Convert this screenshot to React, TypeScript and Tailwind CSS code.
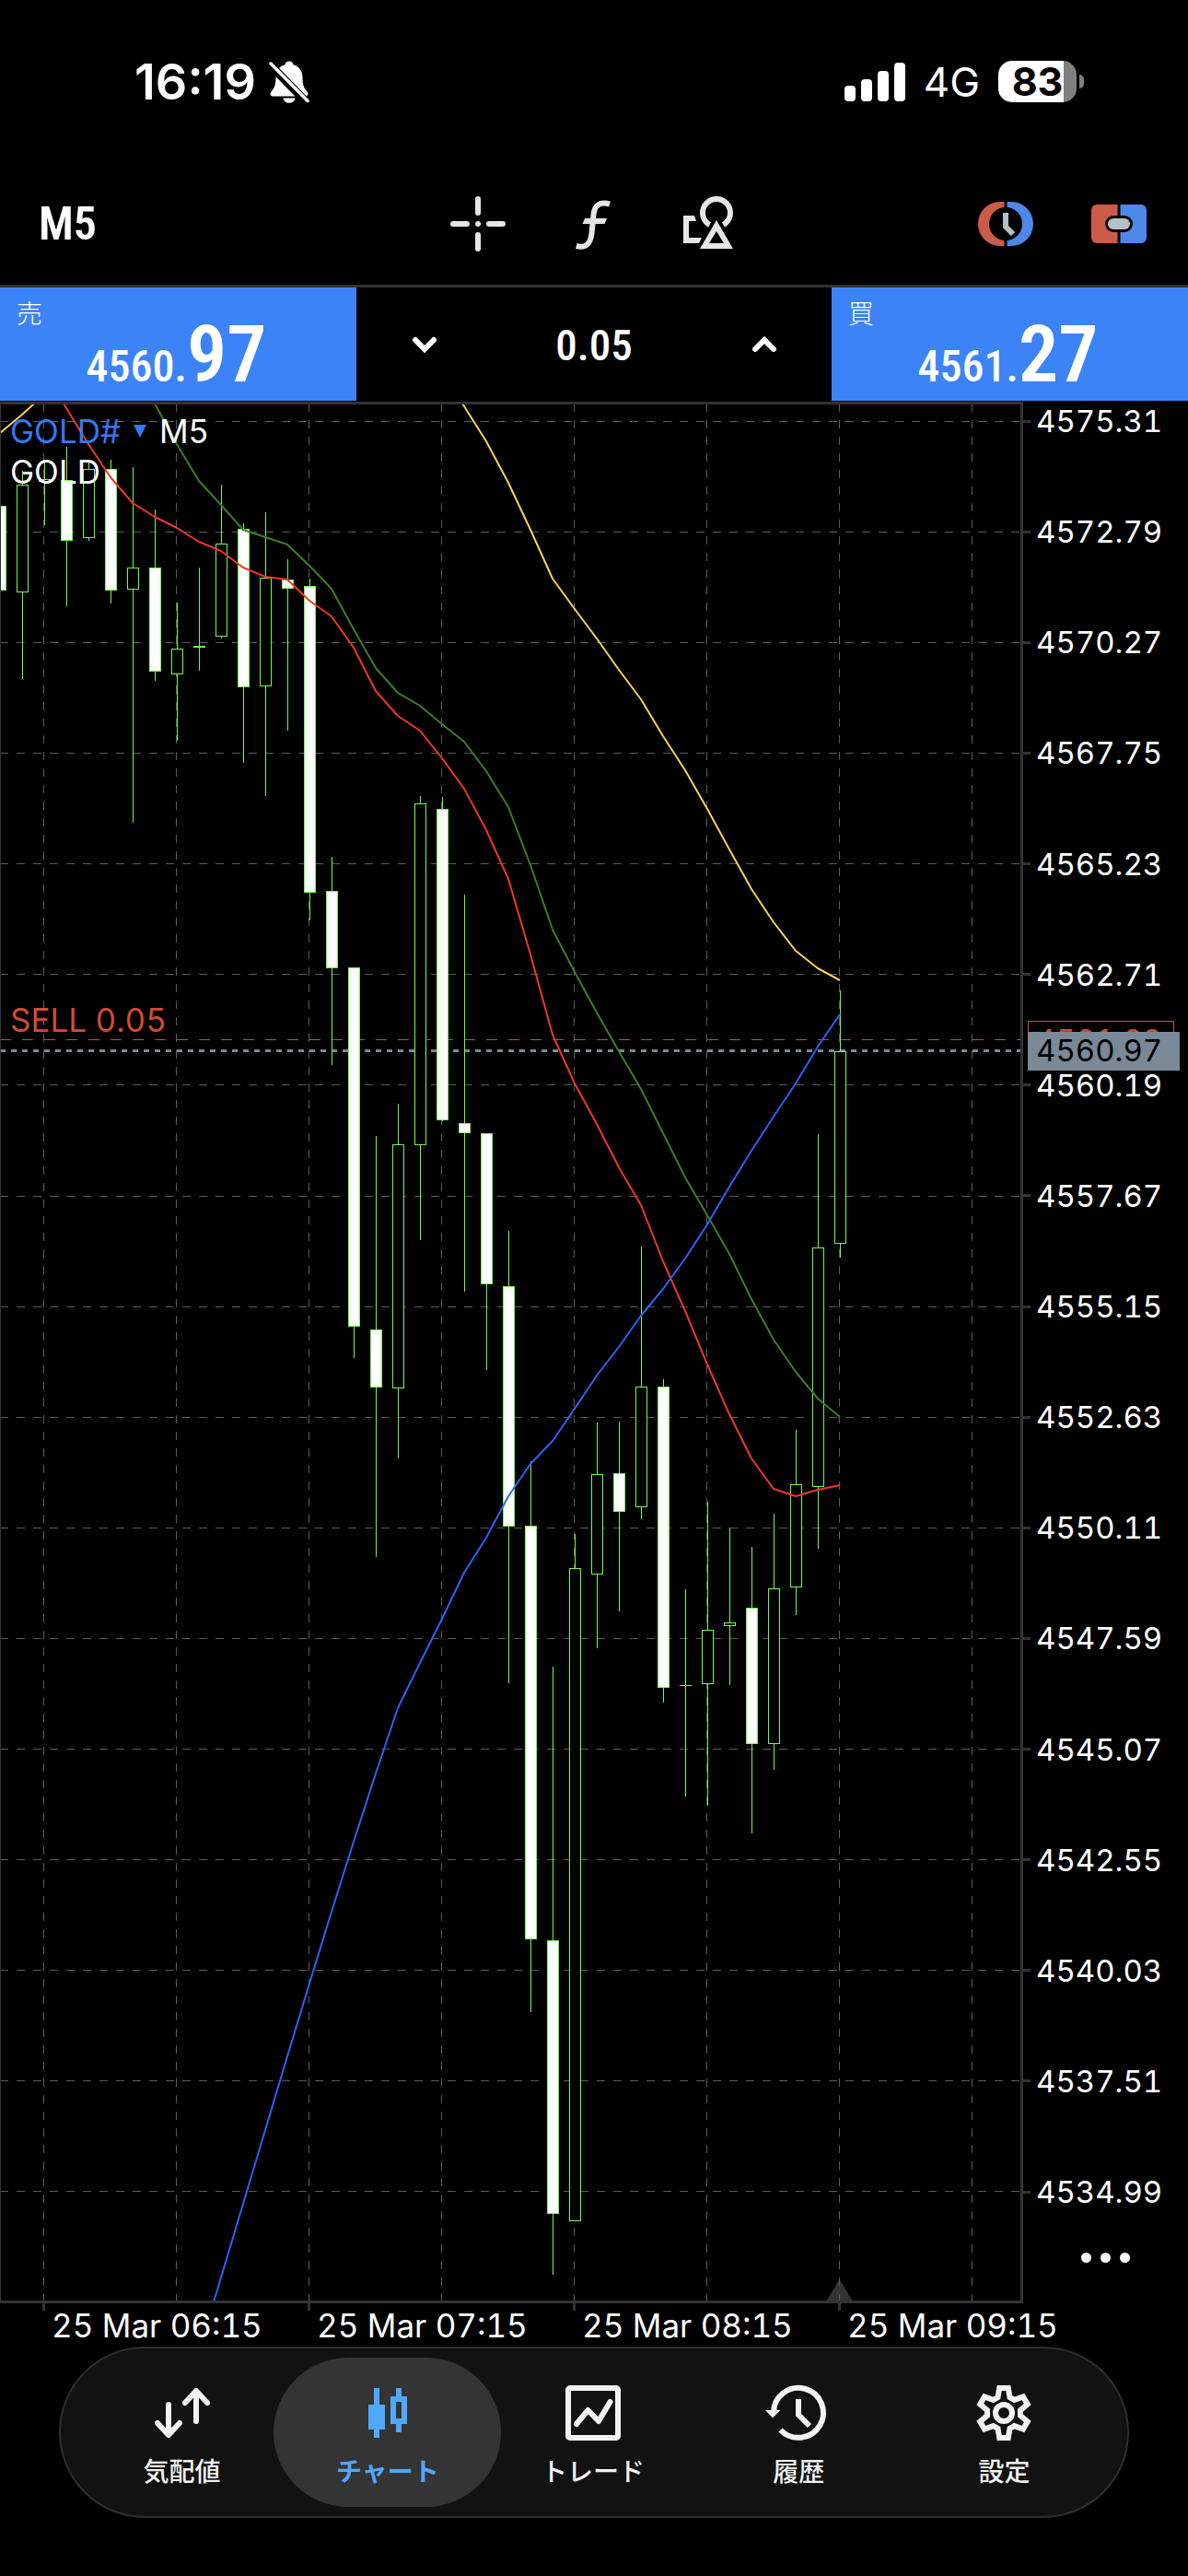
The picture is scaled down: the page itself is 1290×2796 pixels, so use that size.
import React from "react";

type Candle = {
  /** slot index on the time grid */
  slot: number;
  bodyTop: number;
  bodyBottom: number;
  high: number;
  low: number;
  down: boolean;
};

const TOP = 436;
const HEIGHT = 2064;
const WIDTH = 1111;

const up = (slot: number, bodyTop: number, bodyBottom: number, high: number, low: number): Candle => ({
  slot, bodyTop, bodyBottom, high, low, down: false,
});
const down = (slot: number, bodyTop: number, bodyBottom: number, high: number, low: number): Candle => ({
  slot, bodyTop, bodyBottom, high, low, down: true,
});

const candles: Candle[] = [
  down(0, 549, 640, 549, 640),
  up(1, 526, 642, 511, 737),
  up(2, 520, 522, 500, 570),
  down(3, 521, 586, 485, 658),
  up(4, 509, 583, 499, 587),
  down(5, 509, 640, 499, 655),
  up(6, 616, 639, 507, 893),
  down(7, 616, 728, 553, 739),
  up(8, 704, 731, 654, 804),
  up(9, 701, 702, 616, 728),
  up(10, 590, 690, 526, 693),
  down(11, 574, 745, 568, 828),
  up(12, 627, 744, 556, 864),
  down(13, 629, 638, 607, 793),
  down(14, 636, 968, 628, 999),
  down(15, 967, 1050, 930, 1156),
  down(16, 1050, 1439, 1050, 1474),
  down(17, 1443, 1505, 1233, 1690),
  up(18, 1242, 1506, 1198, 1583),
  up(19, 872, 1242, 864, 1346),
  down(20, 878, 1215, 865, 1217),
  down(21, 1219, 1229, 971, 1402),
  down(22, 1230, 1393, 1230, 1487),
  down(23, 1396, 1656, 1336, 1827),
  down(24, 1656, 2104, 1586, 2184),
  down(25, 2106, 2402, 1809, 2469),
  up(26, 1702, 2410, 1665, 2410),
  up(27, 1600, 1708, 1544, 1789),
  down(28, 1599, 1640, 1543, 1749),
  up(29, 1505, 1635, 1353, 1649),
  down(30, 1505, 1831, 1497, 1848),
  up(31, 1829, 1829, 1725, 1950),
  up(32, 1769, 1827, 1630, 1960),
  up(33, 1761, 1764, 1658, 1829),
  down(34, 1745, 1892, 1679, 1990),
  up(35, 1724, 1892, 1643, 1921),
  up(36, 1611, 1722, 1552, 1753),
  up(37, 1354, 1613, 1231, 1681),
  up(38, 1141, 1349, 1075, 1365),
];

/** Moving averages: first slot followed by one value for each slot. */
const averages = [
  {
    color: "#3a7f25",
    first: 6,
    values: [396, 438, 482, 522, 548, 575, 583, 591, 614, 639, 683, 725, 752, 766, 786, 805, 837, 876, 939, 1009, 1055, 1099, 1141, 1182, 1230, 1278, 1319, 1361, 1410, 1454, 1489, 1518, 1538],
  },
  {
    color: "#f23625",
    first: 2,
    values: [403, 443, 482, 518, 546, 561, 573, 588, 598, 616, 626, 629, 652, 669, 703, 750, 777, 793, 823, 856, 901, 954, 1036, 1123, 1176, 1220, 1267, 1308, 1369, 1423, 1481, 1535, 1583, 1616, 1624, 1617, 1612],
  },
  {
    color: "#fbd15b",
    first: 0,
    values: [470, 450, 428],
  },
  {
    color: "#fbd15b",
    first: 20,
    values: [405, 441, 479, 524, 575, 628, 661, 693, 727, 759, 799, 836, 878, 922, 965, 1001, 1032, 1051, 1064],
  },
  {
    color: "#2b62fb",
    first: 9,
    values: [2553, 2472, 2392, 2312, 2232, 2153, 2075, 1999, 1925, 1854, 1805, 1757, 1707, 1669, 1624, 1589, 1564, 1529, 1493, 1462, 1428, 1399, 1366, 1329, 1288, 1249, 1212, 1176, 1136, 1101],
  },
];

const prices = [
  "4575.31", "4572.79", "4570.27", "4567.75", "4565.23", "4562.71", "4560.19", "4557.67", "4555.15",
  "4552.63", "4550.11", "4547.59", "4545.07", "4542.55", "4540.03", "4537.51", "4534.99",
];
const times = ["25 Mar 06:15", "25 Mar 07:15", "25 Mar 08:15", "25 Mar 09:15"];
const gridColumns = [47, 191, 335, 479, 623, 767, 911, 1055];
const gridRows = prices.map((_, i) => Math.round(457 + i * 120.08) + 0.5);

const fraction = (y: number) => `${((y - TOP) / HEIGHT) * 100}%`;

function ChartDrawing() {
  return (
    <svg viewBox={`0 ${TOP} ${WIDTH} ${HEIGHT}`} className="block h-auto w-full" aria-hidden="true">
      <path d="M897 2498 L911.5 2474 L926 2498 Z" fill="#333" />
      <g stroke="#5c5c5c" strokeWidth="1" strokeDasharray="9 9" shapeRendering="crispEdges">
        {gridColumns.map((x) => (
          <line key={x} x1={x + 0.5} x2={x + 0.5} y1="438" y2="2497" />
        ))}
        {gridRows.map((y) => (
          <line key={y} x1="0" x2="1108" y1={y} y2={y} />
        ))}
      </g>
      <line x1="0" x2="1108" y1="1128.5" y2="1128.5" stroke="#cf4a33" strokeDasharray="12 12" shapeRendering="crispEdges" />
      <line x1="0" x2="1108" y1="1140.5" y2="1140.5" stroke="#7b8896" strokeWidth="3" strokeDasharray="6 6" shapeRendering="crispEdges" />
      <g stroke="#75fb4c" strokeWidth="1" shapeRendering="crispEdges">
        {candles.map((c) => {
          const x = c.slot * 24 + 0.5;
          return (
            <g key={c.slot}>
              {c.high < c.low && <line x1={x} x2={x} y1={c.high} y2={c.low} />}
              {c.bodyTop === c.bodyBottom ? (
                <line x1={x - 6.5} x2={x + 6.5} y1={c.bodyTop + 0.5} y2={c.bodyTop + 0.5} />
              ) : (
                <rect x={x - 6} y={c.bodyTop + 0.5} width="12" height={c.bodyBottom - c.bodyTop} fill={c.down ? "#fff" : "#000"} />
              )}
            </g>
          );
        })}
      </g>
      <g fill="none" strokeWidth="2" strokeLinejoin="round">
        {averages.map((a) => (
          <polyline
            key={`${a.color}-${a.first}`}
            stroke={a.color}
            points={a.values.map((y, i) => `${(a.first + i) * 24},${y}`).join(" ")}
          />
        ))}
      </g>
      <g fill="#333">
        <rect x="0" y="436" width="1111" height="3" />
        <rect x="0" y="2497" width="1111" height="3" />
        <rect x="1108" y="436" width="3" height="2064" />
        <rect x="0" y="436" width="1" height="2064" />
      </g>
    </svg>
  );
}

function BellOff() {
  return (
    <svg viewBox="0 0 44 46" className="h-[46px] w-11" aria-label="消音">
      <path
        d="M22 0.5c2.5 0 4.2 1.6 4.5 3.8 6.3 1.6 10 7 10 13.7 0 9 2 12 5 15.5 2 2.5 .8 5-2 5H4.500c-2.800 0-4-2.500-2-5C5.500 30 7.500 27 7.500 18c0-6.700 3.700-12.100 10-13.700C17.800 2.100 19.500 .5 22 .5zM15.500 40.500h13c-.6 3.300-3 5.300-6.500 5.300s-5.900-2-6.500-5.300z"
        fill="#fff"
      />
      <path d="M0 3 L41 45" stroke="#000" strokeWidth="9" />
      <path d="M2 3 L42 43.500" stroke="#fff" strokeWidth="3.500" strokeLinecap="round" />
    </svg>
  );
}

function StatusBar() {
  return (
    <header className="flex h-[177px] items-center justify-between pr-[113px] pl-[146px] text-white">
      <div className="flex items-center gap-[14px]">
        <span className="text-[54px] font-semibold">16:19</span>
        <BellOff />
      </div>
      <div className="flex items-center">
        <svg viewBox="0 0 66 42" className="h-[42px] w-[66px]" fill="#fff" aria-label="電波強度">
          <rect x="0" y="25" width="12" height="17" rx="4" />
          <rect x="18" y="18" width="12" height="24" rx="4" />
          <rect x="36" y="9" width="12" height="33" rx="4" />
          <rect x="54" y="0" width="12" height="42" rx="4" />
        </svg>
        <span className="ml-5 text-[44px]">4G</span>
        <div className="ml-5 flex items-center gap-[3px]">
          <div className="flex h-[45px] w-[85px] items-center justify-center rounded-[15px] bg-linear-to-r from-white from-84% to-[#7f7f7f] to-84%">
            <span className="text-[43px] leading-none font-bold text-black">83</span>
          </div>
          <span className="h-[15px] w-[5px] rounded-r-full bg-[#7f7f7f]" />
        </div>
      </div>
    </header>
  );
}

function CrosshairIcon() {
  return (
    <svg viewBox="0 0 60 60" className="size-[60px]" stroke="#e6e6e6" strokeWidth="6" strokeLinecap="round">
      <path d="M30 3v15M30 42v15M3 30h15M42 30h15" />
      <circle cx="30" cy="30" r="3" fill="#e6e6e6" stroke="none" />
    </svg>
  );
}

function FunctionIcon() {
  return (
    <svg viewBox="134 13 60 60" className="size-[60px]">
      <path
        d="M182 21.500C171 18.500 165.500 23 164.500 33L162.500 53C161.300 65 156 69.500 145.800 67"
        fill="none"
        stroke="#e6e6e6"
        strokeWidth="6"
      />
      <path d="M155 37h24l-2.500 6h-24z" fill="#e6e6e6" />
    </svg>
  );
}

function ShapesIcon() {
  return (
    <svg viewBox="259 13 60 60" className="size-[60px]">
      <path d="M262 34h12l2 6h-8v18h14l-3 6h-17z" fill="#e6e6e6" />
      <circle cx="298" cy="31" r="15" fill="none" stroke="#e6e6e6" strokeWidth="6" />
      <path d="M298 36l21 37h-42z" fill="#000" stroke="#000" strokeWidth="5" />
      <path d="M298 39l18 31h-36zM298 51l-8 13h16z" fill="#e6e6e6" fillRule="evenodd" />
    </svg>
  );
}

function ClockIcon() {
  return (
    <svg viewBox="0 0 60 48" className="h-12 w-[60px]">
      <path d="M29 0h-5a24 24 0 0 0 0 48h5z" fill="#cb5c4a" />
      <path d="M31 0h5a24 24 0 0 1 0 48h-5z" fill="#4d87e8" />
      <circle cx="30" cy="24" r="18" fill="#000" />
      <rect x="28.500" y="0" width="3" height="48" fill="#000" />
      <path d="M30 12v15l8 8" fill="none" stroke="#b4c0c5" strokeWidth="6" />
    </svg>
  );
}

function OneClickIcon() {
  return (
    <svg viewBox="0 0 60 42" className="h-[42px] w-[60px]">
      <path d="M28.500 0H6a6 6 0 0 0-6 6v30a6 6 0 0 0 6 6h22.500z" fill="#cb5c4a" />
      <path d="M31.500 0H54a6 6 0 0 1 6 6v30a6 6 0 0 1-6 6H31.500z" fill="#4d87e8" />
      <rect x="15" y="12" width="30" height="18" rx="9" fill="#000" />
      <rect x="18" y="15" width="24" height="12" rx="6" fill="#b4c0c5" />
    </svg>
  );
}

function Toolbar() {
  return (
    <div className="grid h-[135px] grid-cols-3 items-center border-b-[3px] border-[#333] pr-[45px] pl-[42px]">
      <button className="justify-self-start font-['Roboto_Condensed',Roboto,sans-serif] text-[50px] font-semibold text-white">
        M5
      </button>
      <div className="flex items-center justify-center gap-[65px]">
        <button aria-label="十字カーソル"><CrosshairIcon /></button>
        <button aria-label="インジケータ"><FunctionIcon /></button>
        <button aria-label="オブジェクト"><ShapesIcon /></button>
      </div>
      <div className="flex items-center justify-end gap-[63px]">
        <button aria-label="取引時間"><ClockIcon /></button>
        <button aria-label="ワンクリック取引"><OneClickIcon /></button>
      </div>
    </div>
  );
}

function PriceButton({ label, whole, cents }: { label: string; whole: string; cents: string }) {
  return (
    <button className="relative flex h-[123px] items-end justify-center bg-[#3c83f7] pr-1 font-['Roboto_Condensed',Roboto,sans-serif] font-semibold text-white">
      <span className="absolute top-1.5 left-[18px] font-['Noto_Sans_CJK_JP',sans-serif] text-[28px] font-light">{label}</span>
      <span className="flex items-baseline">
        <span className="text-[48px] font-medium">{whole}</span>
        <span className="text-[86px] leading-[100px]">{cents}</span>
      </span>
    </button>
  );
}

function Chevron({ flip }: { flip?: boolean }) {
  return (
    <svg viewBox="0 0 28 18" className="h-[18px] w-7" fill="none" stroke="#fff" strokeWidth="6" strokeLinecap="round">
      <path d={flip ? "M4 14L14 4L24 14" : "M4 4L14 14L24 4"} />
    </svg>
  );
}

function TradePanel() {
  return (
    <section className="grid grid-cols-[3fr_4fr_3fr] pb-px">
      <PriceButton label="売" whole="4560." cents="97" />
      <div className="flex items-center">
        <button className="flex w-[147px] shrink-0 items-center justify-center self-stretch" aria-label="減らす"><Chevron /></button>
        <input
          aria-label="数量"
          defaultValue="0.05"
          className="w-0 flex-1 bg-transparent pt-1 text-center font-['Roboto_Condensed',Roboto,sans-serif] text-[47px] font-medium text-white outline-none"
        />
        <button className="flex w-[147px] shrink-0 items-center justify-center self-stretch" aria-label="増やす"><Chevron flip /></button>
      </div>
      <PriceButton label="買" whole="4561." cents="27" />
    </section>
  );
}

function PriceAxis() {
  return (
    <div className="relative flex w-[179px] shrink-0 flex-col text-[33px] leading-10 tabular-nums">
      <ol className="flex flex-1 flex-col justify-between pt-px">
        {prices.map((p) => (
          <li key={p} className="flex items-center gap-1.5 text-white">
            <span className="h-[3px] w-2 bg-[#333]" />
            {p}
          </li>
        ))}
      </ol>
      <button className="flex h-[101px] items-center justify-center gap-[10px] pt-0.5" aria-label="その他">
        <span className="size-[11px] rounded-full bg-white" />
        <span className="size-[11px] rounded-full bg-white" />
        <span className="size-[11px] rounded-full bg-white" />
      </button>
      <span
        className="absolute left-[5px] h-[42px] w-[159px] -translate-y-1/2 border border-[#d14b34] bg-black pl-2 text-[#d14b34]"
        style={{ top: fraction(1129) }}
      >
        4561.23
      </span>
      <span
        className="absolute left-[5px] h-[42px] w-[165px] -translate-y-1/2 bg-[#7b8896] pl-[9px] text-black"
        style={{ top: fraction(1141) }}
      >
        4560.97
      </span>
    </div>
  );
}

function Chart() {
  return (
    <main>
      <div className="flex">
        <section className="relative min-w-0 flex-1 text-[35px] leading-11">
          <ChartDrawing />
          <div className="absolute top-[10px] left-[11px]">
            <div className="flex items-center">
              <button className="flex items-center text-[#3478f6]">
                GOLD#
                <svg viewBox="0 0 14 14" className="mx-[14px] size-[14px]" fill="#3478f6"><path d="M0 0h14L7 14z" /></svg>
              </button>
              <span className="text-white">M5</span>
            </div>
            <div className="text-white">GOLD</div>
          </div>
          <span className="absolute left-[11px] -translate-y-1/2 text-[#d14b34] tabular-nums" style={{ top: fraction(1107) }}>
            SELL 0.05
          </span>
        </section>
        <PriceAxis />
      </div>
      <ol className="grid grid-cols-4 pr-[92px] pl-[46px] text-[35px] text-white tabular-nums">
        {times.map((t) => (
          <li key={t} className="h-[47px] whitespace-nowrap">
            <span className="block h-2 w-[3px] bg-[#333]" />
            <span className="block pl-[10px] leading-8">{t}</span>
          </li>
        ))}
      </ol>
    </main>
  );
}

function QuotesIcon() {
  return (
    <svg viewBox="0 0 60 60" className="size-[60px]" fill="none" stroke="currentColor" strokeWidth="6" strokeLinecap="round" strokeLinejoin="round">
      <path d="M15 21v32M3 41l12 13 12-13M45 39V7M33 19L45 6l12 13" />
    </svg>
  );
}

function CandlesIcon() {
  return (
    <svg viewBox="0 0 60 60" className="size-[60px]" fill="currentColor">
      <path d="M15 3h6v18h6v27h-6v9h-6v-9H9V21h6z" />
      <path d="M39 3h6v9h6v30h-6v9h-6v-9h-6V12h6zM39 18v18h6V18z" fillRule="evenodd" />
    </svg>
  );
}

function TradeIcon() {
  return (
    <svg viewBox="0 0 60 60" className="size-[60px]" fill="none" stroke="currentColor" strokeWidth="6">
      <rect x="3" y="3" width="54" height="54" rx="2" />
      <path d="M12 42l12.500-15L36 39l12.500-21" strokeLinecap="round" strokeLinejoin="round" />
    </svg>
  );
}

function HistoryIcon() {
  return (
    <svg viewBox="0 0 60 60" className="size-[60px] overflow-visible" fill="none" stroke="currentColor" strokeWidth="6">
      <path d="M3 30a27 27 0 1 1 7.500 18.500" />
      <path d="M30 15v17l12 12" />
      <path d="M-6 27h16.500L2 35.500z" fill="currentColor" stroke="none" />
    </svg>
  );
}

function SettingsIcon() {
  const points = [0, 60, 120, 180, 240, 300].flatMap((deg) => {
    const r = (deg * Math.PI) / 180;
    return [[-6.5, -17], [-4.8, -27], [4.8, -27], [6.5, -17]].map(
      ([x, y]) => `${(x * Math.cos(r) - y * Math.sin(r)).toFixed(2)},${(x * Math.sin(r) + y * Math.cos(r)).toFixed(2)}`,
    );
  });
  return (
    <svg viewBox="-30 -30 60 60" className="size-[60px]" fill="none" stroke="currentColor" strokeWidth="6">
      <polygon points={points.join(" ")} />
      <circle r="9" />
    </svg>
  );
}

const tabs = [
  { label: "気配値", icon: <QuotesIcon /> },
  { label: "チャート", icon: <CandlesIcon />, active: true },
  { label: "トレード", icon: <TradeIcon /> },
  { label: "履歴", icon: <HistoryIcon /> },
  { label: "設定", icon: <SettingsIcon /> },
];

function TabBar() {
  return (
    <nav className="mx-16 mb-[63px] rounded-full border-2 border-[#2e2e2e] bg-[#121212] py-[10px] pr-[22px] pl-5">
      <ul className="grid grid-cols-5">
        {tabs.map((t) => (
          <li key={t.label} className="grid">
            <button
              aria-current={t.active ? "page" : undefined}
              className={
                t.active
                  ? "-mx-3 flex h-[162px] flex-col items-center rounded-full bg-[#343434] pt-[30px] font-bold text-[#4fa8fb]"
                  : "-mx-3 flex h-[162px] flex-col items-center rounded-full pt-[30px] font-medium text-[#f2f2f2]"
              }
            >
              {t.icon}
              <span className="mt-3 font-['Noto_Sans_CJK_JP',sans-serif] text-[28px] leading-10">{t.label}</span>
            </button>
          </li>
        ))}
      </ul>
    </nav>
  );
}

export default function App() {
  return (
    <div className="min-h-screen bg-black font-[Inter,sans-serif]">
      <StatusBar />
      <Toolbar />
      <TradePanel />
      <Chart />
      <TabBar />
    </div>
  );
}
